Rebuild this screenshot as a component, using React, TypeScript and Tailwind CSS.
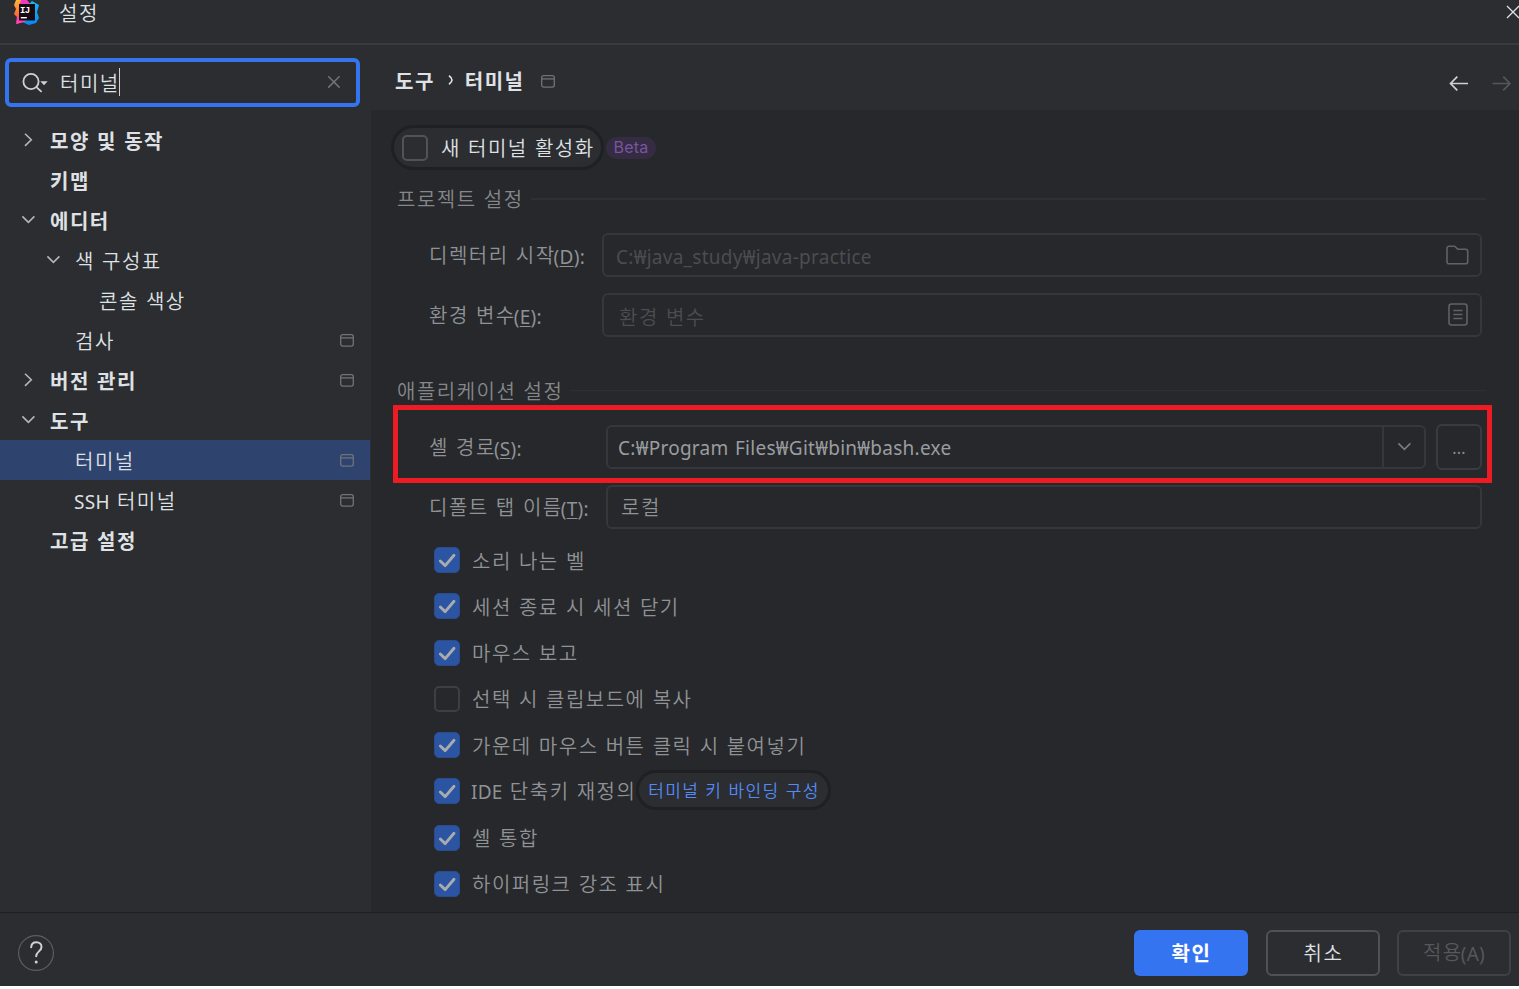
import type { ReactNode } from "react";

const KR = "font-['Noto_Sans_CJK_KR',sans-serif] tracking-[1.5px] [word-spacing:1.2px]";
const LATIN = "font-['Noto_Sans','Noto_Sans_CJK_KR',sans-serif] font-normal tracking-[0.27px]";

interface TreeItem {
  label: string;
  latin?: string;
  level: 0 | 1 | 2;
  arrow?: "right" | "down";
  project?: boolean;
  selected?: boolean;
}

const tree: TreeItem[] = [
  { label: "모양 및 동작", level: 0, arrow: "right" },
  { label: "키맵", level: 0 },
  { label: "에디터", level: 0, arrow: "down" },
  { label: "색 구성표", level: 1, arrow: "down" },
  { label: "콘솔 색상", level: 2 },
  { label: "검사", level: 1, project: true },
  { label: "버전 관리", level: 0, arrow: "right", project: true },
  { label: "도구", level: 0, arrow: "down" },
  { label: "터미널", level: 1, project: true, selected: true },
  { label: " 터미널", latin: "SSH", level: 1, project: true },
  { label: "고급 설정", level: 0 },
];

const indent = {
  0: "pl-[20px]",
  1: "pl-[45px]",
  2: "pl-[69px]",
};

const options = [
  { label: "소리 나는 벨", checked: true },
  { label: "세션 종료 시 세션 닫기", checked: true },
  { label: "마우스 보고", checked: true },
  { label: "선택 시 클립보드에 복사", checked: false },
  { label: "가운데 마우스 버튼 클릭 시 붙여넣기", checked: true },
  { label: " 단축키 재정의", latin: "IDE", checked: true, link: "터미널 키 바인딩 구성" },
  { label: "셸 통합", checked: true },
  { label: "하이퍼링크 강조 표시", checked: true },
];

function Logo() {
  return (
    <svg width="27" height="26" viewBox="0 0 27 26" className="shrink-0">
      <defs>
        <linearGradient id="warm" x1="0" y1="0" x2="0" y2="1">
          <stop offset="0" stopColor="#ffb43a" />
          <stop offset="0.5" stopColor="#ff7a2f" />
          <stop offset="1" stopColor="#ff2f86" />
        </linearGradient>
        <linearGradient id="cool" x1="0" y1="0" x2="0" y2="1">
          <stop offset="0" stopColor="#10bdf7" />
          <stop offset="1" stopColor="#0a86f2" />
        </linearGradient>
      </defs>
      <path d="M16 4 19 1 26 5 24 12 26 18 23 23 16 25 9 22 12 19 21 19 21 4Z" fill="url(#cool)" />
      <path d="M3 0H9L13 4 8 9 7 20 12 21 4 24 4 17 1 14 3 9 1 5Z" fill="url(#warm)" />
      <path d="M8 0 14 0 18 5 12 8 6 6Z" fill="#f03bb8" />
      <path d="M4 16 8 19 14 20 11 22 3 24Z" fill="#ff43b0" />
      <rect x="6" y="4" width="16" height="16.5" fill="#170a12" />
      <text x="7" y="12.8" fontSize="9" fontWeight="700" letterSpacing="-0.6" fontFamily="Liberation Mono, monospace" fill="#fff">
        IJ
      </text>
      <rect x="7.8" y="17" width="6" height="1.4" fill="#fff" />
    </svg>
  );
}

function Chevron({ dir, className = "text-[#b4b6ba]" }: { dir: "right" | "down"; className?: string }) {
  return (
    <svg width="16" height="16" viewBox="0 0 16 16" fill="none" stroke="currentColor" strokeWidth="1.6" className={className}>
      {dir === "right" ? <path d="M5 1.7 11.3 7.8 5 13.9" /> : <path d="M2.4 4.4 8.4 10.4 14.4 4.4" />}
    </svg>
  );
}

function ProjectIcon() {
  return (
    <svg width="14" height="13" viewBox="0 0 14 13" fill="none" stroke="#6f737a" strokeWidth="1.3">
      <rect x="0.7" y="0.7" width="12.6" height="11.4" rx="2" />
      <path d="M1 3.9h12" />
    </svg>
  );
}

function Checkbox({ checked, bright }: { checked: boolean; bright?: boolean }) {
  if (!checked) {
    return (
      <div
        className={`h-[26px] w-[26px] shrink-0 rounded-[5px] border-2 ${bright ? "border-[#515357]" : "border-[#3d3f42]"}`}
      />
    );
  }
  return (
    <div className="flex h-[26px] w-[26px] shrink-0 items-center justify-center rounded-[5px] border border-[#2a4b8c] bg-[#2b54a3]">
      <svg width="24" height="24" viewBox="0 0 24 24" fill="none" stroke="#a9abae" strokeWidth="2.9" strokeLinecap="round" strokeLinejoin="round">
        <path d="M5.3 13 10.2 17.6 19 7.3" />
      </svg>
    </div>
  );
}

function Label({ children, mnemonic }: { children: ReactNode; mnemonic: string }) {
  return (
    <div className="flex items-center whitespace-nowrap text-[#909295]">
      <span>{children}</span>
      <span className={`${LATIN} relative top-[2px] -ml-[2px] text-[19px]`}>
        (<span className="underline decoration-1 underline-offset-2">{mnemonic}</span>):
      </span>
    </div>
  );
}

function SectionTitle({ children, thin }: { children: ReactNode; thin?: boolean }) {
  return (
    <div className="flex h-6 items-center gap-[7px] pr-[33px] pl-[26px] text-[#85878a]">
      <span className="whitespace-nowrap">{children}</span>
      <div className={`flex-1 bg-[#2e3033] ${thin ? "-mt-px h-px" : "h-[2px]"}`} />
    </div>
  );
}

function Sidebar() {
  return (
    <aside className="flex w-[371px] shrink-0 flex-col">
      <div className="mt-[13px] ml-[5px] flex h-[49px] w-[355px] items-center rounded-[6px] border-4 border-[#3574f0] pl-[13px]">
        <svg width="27" height="22" viewBox="0 0 27 22" fill="none" stroke="#ced0d6" strokeWidth="1.8">
          <circle cx="9" cy="9.5" r="7.6" />
          <path d="m14.2 14.8 5.4 5" />
          <path d="M18.3 9.2h7.4L22 13.2Z" fill="#ced0d6" stroke="none" />
        </svg>
        <span className="ml-[11px] text-[#dfe1e5]">터미널</span>
        <span className="-mt-px -ml-px h-7 w-px bg-[#ced0d6]" />
        <svg width="14" height="14" viewBox="0 0 14 14" stroke="#6f737a" strokeWidth="1.5" className="-mt-px mr-[15px] ml-auto">
          <path d="m1.2 1.2 11.4 11.4M12.6 1.2 1.2 12.6" />
        </svg>
      </div>

      <div className="mt-[13px] flex flex-col text-[#dfe1e5]">
        {tree.map((item) => (
          <div
            key={item.label}
            className={`flex h-10 w-[370px] items-center pr-4 ${indent[item.level]} ${item.selected ? "bg-[#2e436e]" : ""}`}
          >
            <div className="-mt-px w-[30px]">{item.arrow && <Chevron dir={item.arrow} />}</div>
            <span className={`pt-[2px] whitespace-pre ${item.level === 0 ? "font-bold" : ""}`}>
              {item.latin && <span className={`${LATIN} -ml-px text-[19px]`}>{item.latin}</span>}
              {item.label}
            </span>
            {item.project && (
              <div className="ml-auto">
                <ProjectIcon />
              </div>
            )}
          </div>
        ))}
      </div>
    </aside>
  );
}

function Content() {
  return (
    <main className="flex flex-1 flex-col">
      {/* Breadcrumb */}
      <div className="flex h-[65px] items-center pt-[7px] pr-[7px] pl-[24px] font-bold text-[#dfe1e5]">
        <span>도구</span>
        <svg width="6" height="10" viewBox="0 0 6 10" fill="none" stroke="#dfe1e5" strokeWidth="1.7" className="-mt-[2px] mr-[11px] ml-[13px]">
          <path d="M1 0.8Q4 3 4 5T1 9.2" />
        </svg>
        <span className="mr-4">터미널</span>
        <ProjectIcon />
        <div className="mt-[5px] ml-auto flex gap-[23px]">
          <svg width="20" height="16" viewBox="0 0 20 16" fill="none" stroke="#ced0d6" strokeWidth="1.7">
            <path d="M19 7.5H1.5M8.3 0.7 1.5 7.5l6.8 6.8" />
          </svg>
          <svg width="20" height="16" viewBox="0 0 20 16" fill="none" stroke="#55575b" strokeWidth="1.7">
            <path d="M0.5 7.5H18M11.2 0.7 18 7.5l-6.8 6.8" />
          </svg>
        </div>
      </div>

      <div className="flex h-[802px] flex-col bg-[#26282b] pt-[15px]">
        <div className="flex items-center gap-[2px] pl-[20px]">
          <div className="flex h-[45px] w-[213px] items-center gap-[13px] rounded-full border-[3px] border-[#1f2023] bg-[#2b2d30] pl-[8px] whitespace-nowrap text-[#dfe1e5]">
            <Checkbox checked={false} bright />
            <span>새 터미널 활성화</span>
          </div>
          <div className="flex h-[22px] w-[50px] items-center justify-center rounded-full bg-[#352c44] pb-px font-[Inter,sans-serif] text-[16px] font-normal tracking-[0.2px] text-[#78569c]">
            Beta
          </div>
        </div>

        <div className="mt-[17px]">
          <SectionTitle>프로젝트 설정</SectionTitle>
        </div>

        <div className="mt-[22px] flex flex-col gap-4 pr-[37px] pl-[58px]">
          <div className="flex h-[44px] items-center">
            <div className="w-[173px]">
              <Label mnemonic="D">디렉터리 시작</Label>
            </div>
            <div className="flex h-full flex-1 items-center rounded-[6px] border-2 border-[#35373a] pr-[11px] pl-[12px]">
              <span className={`${LATIN} flex-1 pt-[4px] text-[19px] text-[#4b4d50]`}>C:₩java_study₩java-practice</span>
              <svg width="23" height="20" viewBox="0 0 23 20" fill="none" stroke="#606266" strokeWidth="1.6" className="-mt-px">
                <path d="M1 3.2a2 2 0 0 1 2-2h5.6l3.2 3h7.9a2 2 0 0 1 2 2v10.6a2 2 0 0 1-2 2H3a2 2 0 0 1-2-2Z" />
              </svg>
            </div>
          </div>
          <div className="flex h-[44px] items-center">
            <div className="w-[173px]">
              <Label mnemonic="E">환경 변수</Label>
            </div>
            <div className="flex h-full flex-1 items-center rounded-[6px] border-2 border-[#35373a] pr-[12px] pl-[15px]">
              <span className="flex-1 pt-[3px] text-[#4b4d50]">환경 변수</span>
              <svg width="20" height="23" viewBox="0 0 20 23" fill="none" stroke="#606266" strokeWidth="1.6" className="-mt-[2px]">
                <rect x="1" y="1" width="18" height="21" rx="2.5" />
                <path d="M5.3 7.5h9.2M5.3 11.5h9.2M5.3 15.5h9.2" strokeWidth="1.4" />
              </svg>
            </div>
          </div>
        </div>

        <div className="mt-[42px]">
          <SectionTitle thin>애플리케이션 설정</SectionTitle>
        </div>

        <div className="relative mt-[21px] flex h-[46px] items-center pr-[37px] pl-[58px]">
          <div className="w-[177px]">
            <Label mnemonic="S">셸 경로</Label>
          </div>
          <div className="flex h-[44px] flex-1 items-center rounded-[6px] border-2 border-[#35373a] text-[#9b9da0]">
            <span className={`${LATIN} flex-1 pt-[3px] pl-[10px] text-[19px]`}>C:₩Program Files₩Git₩bin₩bash.exe</span>
            <div className="flex h-full w-[42px] items-center justify-center border-l-2 border-[#35373a]">
              <Chevron dir="down" className="text-[#7b7d81]" />
            </div>
          </div>
          <div className={`${LATIN} ml-[10px] flex h-[46px] w-[46px] items-center justify-center rounded-[6px] border-2 border-[#393b3e] pt-[2px] text-[16px] text-[#8c8e91]`}>
            ...
          </div>
          {/* Highlight frame around the shell path */}
          <div className="pointer-events-none absolute -top-[19px] right-[27px] left-[22px] h-[78px] border-[5px] border-[#ed1c24]" />
        </div>

        <div className="mt-[15px] flex h-[44px] items-center pr-[37px] pl-[58px]">
          <div className="w-[177px]">
            <Label mnemonic="T">디폴트 탭 이름</Label>
          </div>
          <div className="flex h-full flex-1 items-center rounded-[6px] border-2 border-[#35373a] pl-[13px] text-[#909295]">
            로컬
          </div>
        </div>

        <div className="mt-[8px] flex flex-col pl-[63px] text-[#909295]">
          {options.map((option) => (
            <div key={option.label} className="flex h-[46.25px] items-center whitespace-nowrap">
              <Checkbox checked={option.checked} />
              <span className="ml-[12px] pt-px whitespace-pre">
                {option.latin && <span className={`${LATIN} -ml-px text-[19px]`}>{option.latin}</span>}
                {option.label}
              </span>
              {option.link && (
                <span className="-mt-[2px] flex h-[40px] w-[195px] items-center justify-center rounded-full border-[3px] border-[#1f2023] bg-[#2b2d30] pb-px text-[17px] tracking-[1.3px] text-[#548af7]">
                  {option.link}
                </span>
              )}
            </div>
          ))}
        </div>
      </div>
    </main>
  );
}

export default function App() {
  return (
    <div className="h-[989px] w-[1519px] overflow-hidden bg-white">
      <div className={`${KR} flex h-[986px] w-full flex-col bg-[#2b2d30] text-[20px] leading-none font-[350]`}>
        <header className="flex h-[45px] items-start justify-between border-b-2 border-[#393b40]">
          <div className="flex items-start pl-[13px] text-[#dfe1e5]">
            <Logo />
            <span className="ml-[19px] leading-[26px]">설정</span>
          </div>
          <svg width="13" height="14" viewBox="0 0 13 14" stroke="#dfe1e5" strokeWidth="1.3" className="mt-[5px]">
            <path d="m1 1 12 12M13 1 1 13" />
          </svg>
        </header>

        <div className="flex h-[867px]">
          <Sidebar />
          <Content />
        </div>

        <footer className="flex flex-1 items-center border-t border-[#1e1f22] pt-[6px] pr-[8px] pl-[18px]">
          <svg width="36" height="36" viewBox="0 0 36 36" fill="none">
            <circle cx="18" cy="18" r="17.4" stroke="#5a5d63" strokeWidth="1.2" />
            <path d="M13.2 12.3c.2-3.2 2.3-5 5.2-5 3 0 5.1 1.9 5.1 4.6 0 4.4-5.3 4.6-5.3 9.3" stroke="#ced0d6" strokeWidth="2" strokeLinecap="round" />
            <circle cx="18.2" cy="26.9" r="1.5" fill="#ced0d6" />
          </svg>
          <div className="ml-auto flex items-center">
            <button className="h-[46px] w-[114px] rounded-[6px] bg-[#3574f0] pl-px font-bold text-white">확인</button>
            <button className="ml-[18px] h-[46px] w-[114px] rounded-[6px] border-2 border-[#4e5157] pl-px text-[#dfe1e5]">취소</button>
            <button className="ml-[17px] h-[46px] w-[114px] rounded-[6px] border-2 border-[#3f4145] text-[#55585d]">
              적용<span className={`${LATIN} relative top-px -ml-[2px] text-[19px]`}>(A)</span>
            </button>
          </div>
        </footer>
      </div>
    </div>
  );
}
